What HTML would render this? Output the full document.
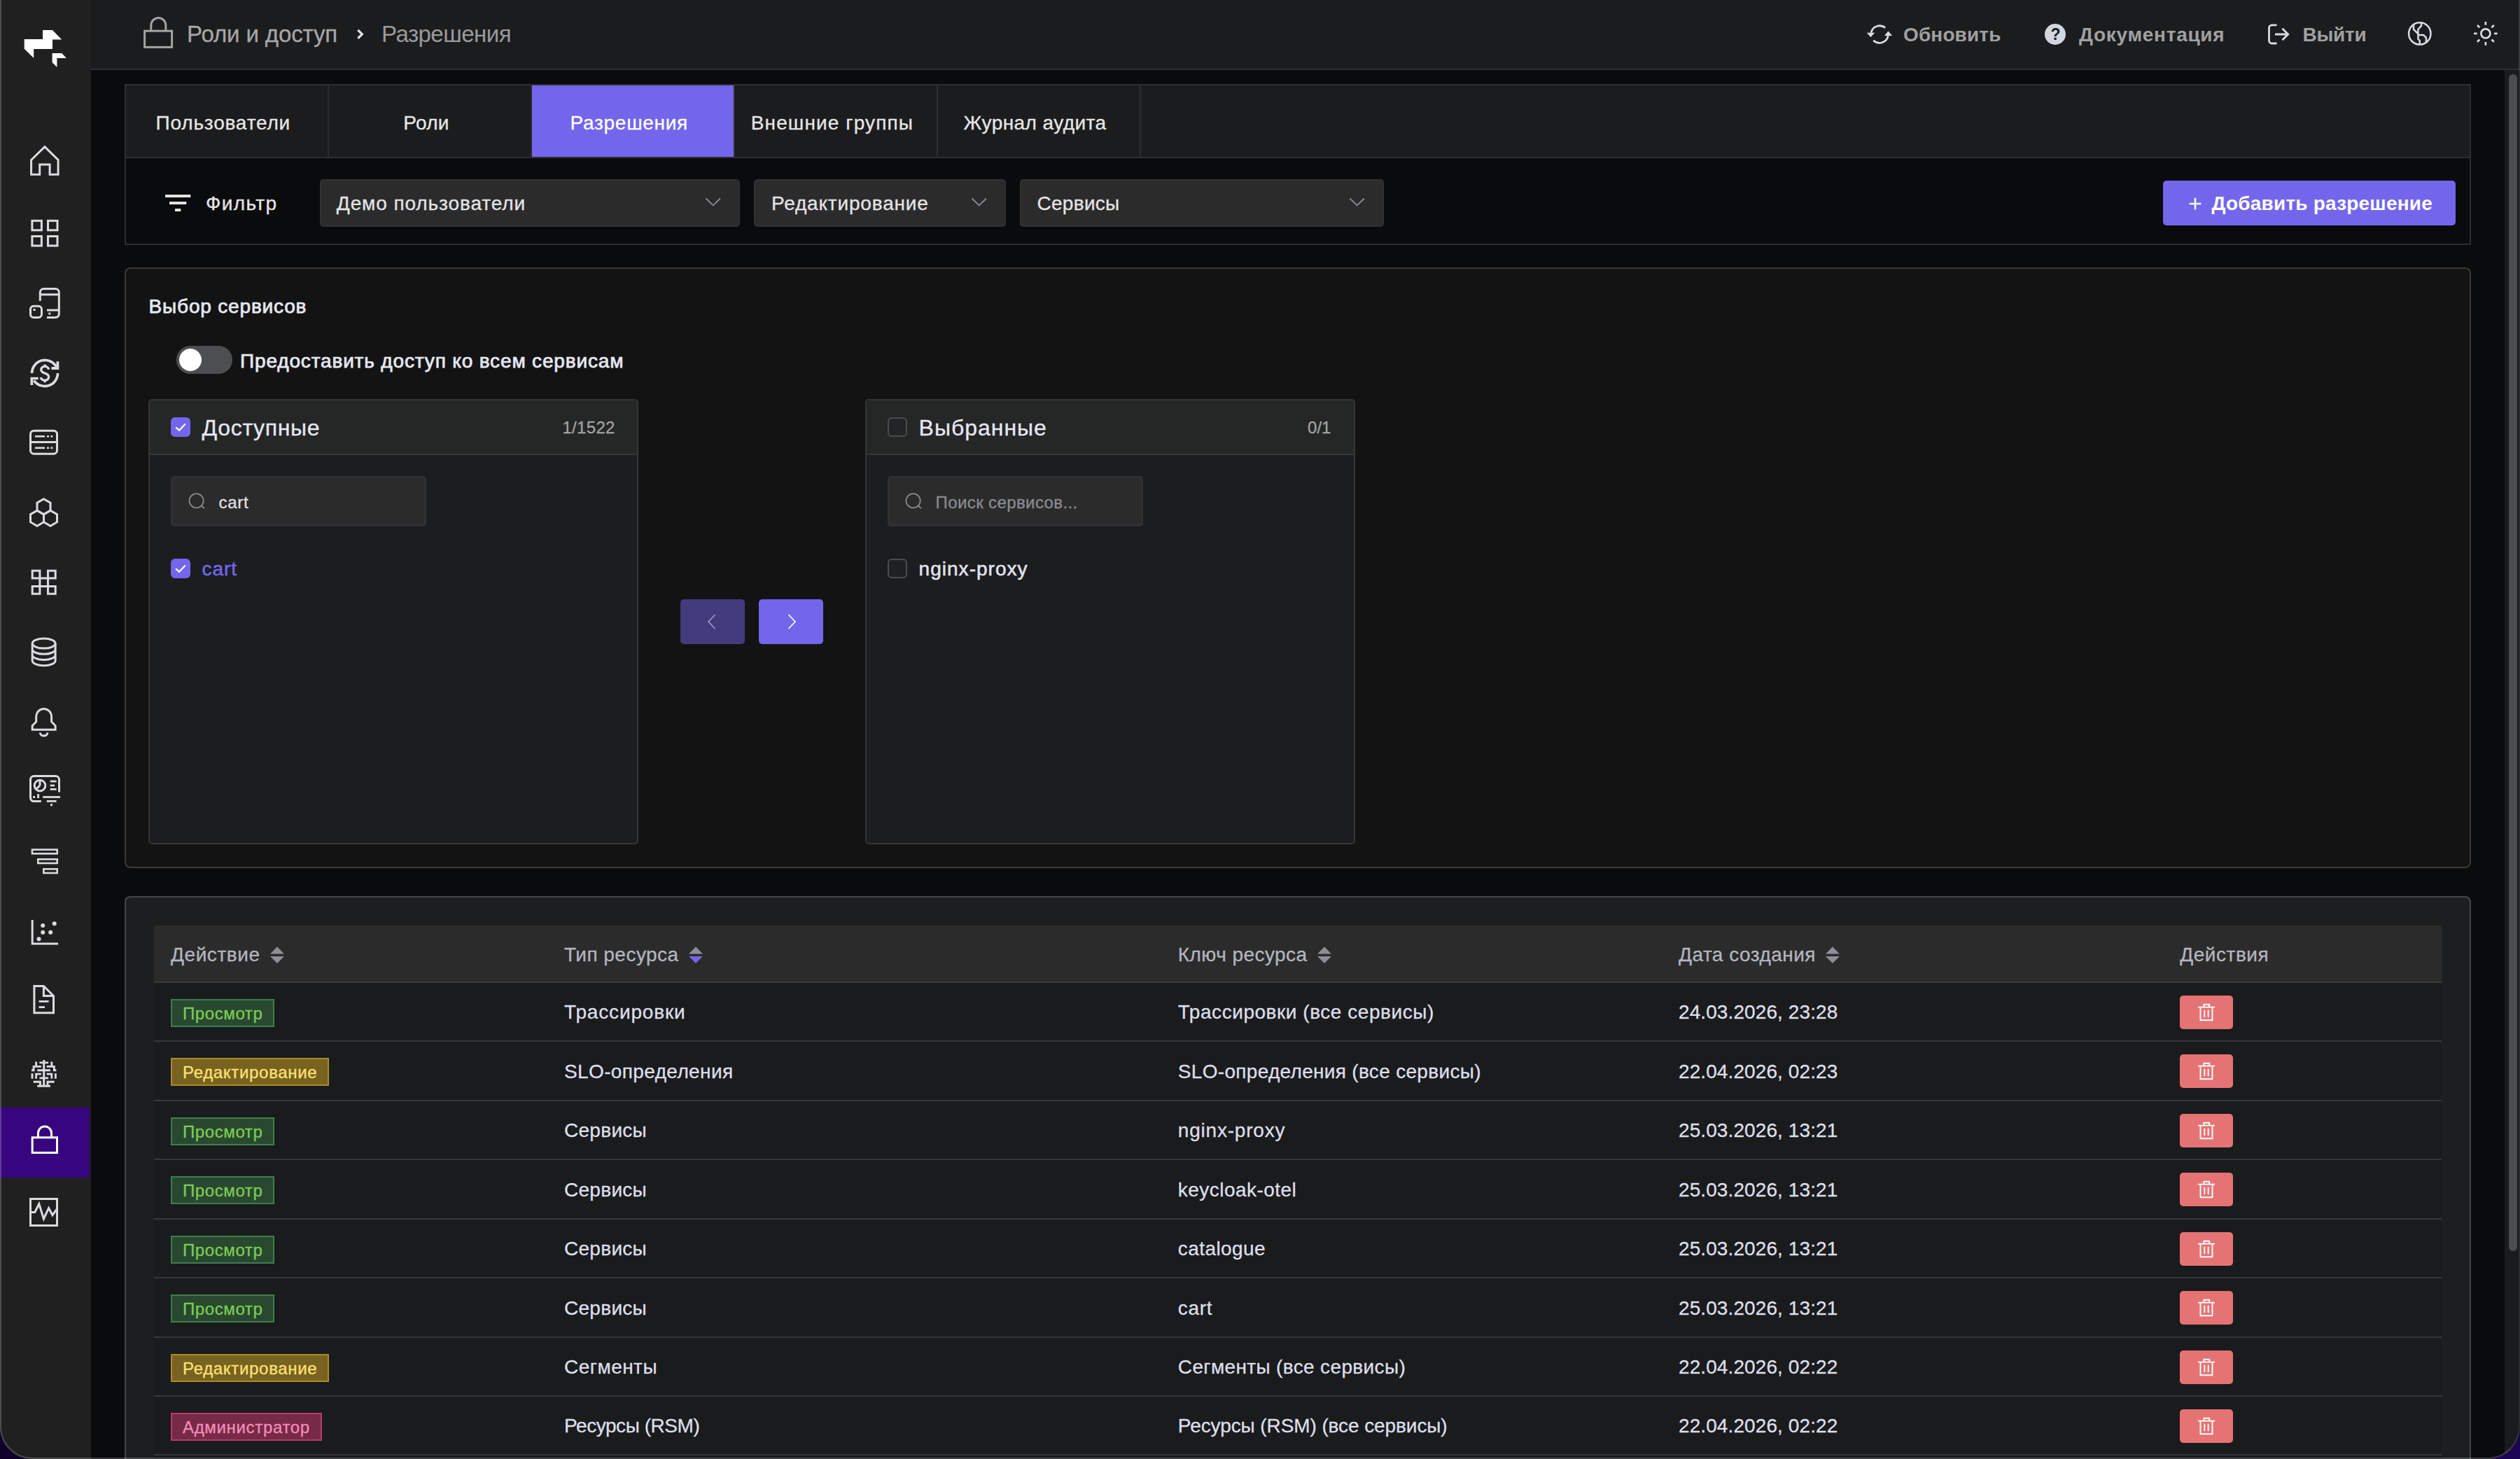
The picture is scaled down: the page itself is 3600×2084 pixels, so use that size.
<!DOCTYPE html>
<html lang="ru"><head><meta charset="utf-8">
<title>Роли и доступ — Разрешения</title>
<style>
html,body{margin:0;padding:0}
body{width:3600px;height:2084px;overflow:hidden;position:relative;background:linear-gradient(90deg,#0f0029 0%,#12002f 50%,#1d0556 100%);font-family:"Liberation Sans",sans-serif;}
#win{position:absolute;left:0;top:0;width:3600px;height:2084px;box-sizing:border-box;overflow:hidden;border-radius:0 0 46px 46px;background:#0a0b0d;}
#frame{position:absolute;left:0;top:-4px;width:3600px;height:2088px;box-sizing:border-box;border-radius:0 0 46px 46px;border:2px solid rgba(255,255,255,.2);border-top:none;border-right-color:rgba(255,255,255,.13);pointer-events:none;z-index:50}
.t{position:absolute;white-space:nowrap;display:block}
svg{position:absolute;overflow:visible}
.ic{fill:none;stroke:#d9dbdf;stroke-width:3}
table{border-collapse:collapse}
</style></head><body>
<div id="win">
<nav style="position:absolute;left:0px;top:0px;width:130px;height:2084px;background:#202020;"><div style="position:absolute;left:0px;top:1582px;width:128px;height:100px;background:#37067f;"></div><svg class="ic" width="130" height="2084" viewBox="0 0 130 2084" style="left:0;top:0"><g fill="#fff" stroke="none"><polygon points="61.1,42.9 75,42.9 88.2,56.4 75,56.4 75,70.1 48.2,70.1 48.2,83.1 34.7,69.7 34.7,56 61.1,56"/><polygon points="74.6,76.1 88.2,76.1 94.9,83.1 81.4,83.1 81.4,96 74.6,89.2"/></g><path d="M44.6 228.5 L63.9 209.6 L83.1 228.5 V249.2 H71.1 V235 H56.7 V249.2 H44.6 Z"/><rect x="45.9" y="315.3" width="13.5" height="13.5"/><rect x="68.5" y="315.3" width="13.5" height="13.5"/><rect x="45.9" y="337.5" width="13.5" height="13.5"/><rect x="68.5" y="337.5" width="13.5" height="13.5"/><path d="M57.3 429.8 V417.5 a5 5 0 0 1 5 -5 H79.3 a5 5 0 0 1 5 5 V448.5 a5 5 0 0 1 -5 5 H67 M57.3 420.8 H84.3 M67 443 H84.3"/><rect x="43.5" y="437.3" width="16" height="16.2" rx="4.5"/><g fill="#d9dbdf" stroke="none"><rect x="47.5" y="441" width="3" height="3"/><rect x="69.3" y="446.5" width="3" height="3"/></g><g stroke-width="3.7"><path d="M45.6 533.1 A18.6 18.6 0 0 1 80.2 523.5 M82.5 533.1 A18.6 18.6 0 0 1 48.6 543.6"/></g><g fill="#d9dbdf" stroke="none"><polygon points="84.3,516.2 84.3,527.9 73.5,527.9 73.5,524.1 80.5,524.1 80.5,516.2"/><polygon points="43.5,549.9 43.5,538.7 54.7,538.7 54.7,542.3 47.3,542.3 47.3,549.9"/></g><path stroke-width="3.3" d="M69.8 527.8 C68.8 524.9 66.5 523.4 64 523.4 C60.8 523.4 58.8 525.4 58.8 528.1 C58.8 531.2 61.3 532.4 64 533.2 C67 534.1 69.6 535.5 69.6 538.6 C69.6 541.5 67.2 543.3 64 543.3 C61.2 543.3 59 541.8 58 539.2 M64 520.4 V523.6 M64 543.2 V546.2"/><rect x="43.5" y="615.2" width="38" height="33" rx="5"/><path d="M43.5 631.6 H81.5"/><g fill="#d9dbdf" stroke="none"><rect x="50" y="622" width="14" height="2.6"/><rect x="67" y="622" width="3" height="2.6"/><rect x="72.4" y="622" width="3" height="2.6"/><rect x="50" y="638.5" width="14" height="2.6"/><rect x="67" y="638.5" width="3" height="2.6"/><rect x="72.4" y="638.5" width="3" height="2.6"/></g><polygon points="62.5,712.7 72.0,718.2 72.0,729.2 62.5,734.7 53.0,729.2 53.0,718.2"/><polygon points="53.0,729.2 62.5,734.7 62.5,745.7 53.0,751.2 43.5,745.7 43.5,734.7"/><polygon points="72.0,729.2 81.5,734.7 81.5,745.7 72.0,751.2 62.5,745.7 62.5,734.7"/><rect x="46.2" y="815.2" width="10.7" height="10.7"/><rect x="68.5" y="815.2" width="10.7" height="10.7"/><rect x="46.2" y="837.5" width="10.7" height="10.7"/><rect x="68.5" y="837.5" width="10.7" height="10.7"/><rect x="56.9" y="825.9" width="11.6" height="11.6"/><ellipse cx="62.65" cy="919.1" rx="16.45" ry="7"/><path d="M46.2 919.1 V943.7 a16.45 7 0 0 0 32.9 0 V919.1 M46.2 927.3 a16.45 7 0 0 0 32.9 0 M46.2 935.5 a16.45 7 0 0 0 32.9 0"/><path d="M46.2 1042.2 V1036.5 L51.7 1031 V1023.5 a10.95 10.95 0 0 1 21.9 0 V1031 L79.1 1036.5 V1042.2 Z M57.3 1046.6 a5.3 4.5 0 0 0 10.6 0"/><path d="M58.8 1144.6 H48.5 a5 5 0 0 1 -5 -5 V1113.5 a5 5 0 0 1 5 -5 H79.5 a5 5 0 0 1 5 5 V1131.6" /><circle cx="57" cy="1122" r="7.8"/><path d="M57 1122 V1114.2 M57 1122 L51.6 1127.4"/><g fill="#d9dbdf" stroke="none"><rect x="71.7" y="1114.6" width="8.9" height="2.8"/><rect x="71.7" y="1120.6" width="6.3" height="2.8"/><rect x="71.7" y="1126" width="8.9" height="2.8"/><rect x="47.1" y="1137" width="3" height="3"/><rect x="53.1" y="1134.2" width="3" height="5.8"/><rect x="61.2" y="1137.1" width="24.8" height="2.8"/><rect x="66.8" y="1143" width="13.8" height="2.8"/><rect x="72" y="1148.2" width="3" height="3"/></g><g stroke-width="2.6"><rect x="46" y="1213.6" width="35.7" height="5.7"/><rect x="54.3" y="1227.3" width="27.4" height="5.7"/><rect x="62.3" y="1241.3" width="19.4" height="5.7"/></g><path d="M46.2 1314 V1348 H83"/><g fill="#d9dbdf" stroke="none"><circle cx="61.2" cy="1322" r="3"/><circle cx="77.7" cy="1319.3" r="3"/><circle cx="61.2" cy="1331.8" r="3"/><circle cx="72.2" cy="1331.8" r="3"/><circle cx="55.5" cy="1341.2" r="3"/></g><path d="M48.9 1408.5 H62.4 L76.5 1422.5 V1446.7 H48.9 Z M62.4 1408.5 V1422.5 H76.5"/><path stroke-width="2.8" d="M55.5 1430.3 H69.6 M55.5 1438.6 H64"/><path stroke-width="2.9" d="M62.7 1514 V1551.4 M56.3 1517.9 H69.1 M53.2 1528.8 H72 M56.3 1539.9 H69.1 M53.2 1551.2 H72 M51.6 1516.5 V1523.4 M58.8 1523.4 H48.1 V1528.8 H45 M46 1533.3 V1540.7 M58.8 1534.1 H51.6 V1540.7 M47.7 1545.2 H57.4 V1551.2 M73.8 1516.5 V1523.4 M66.6 1523.4 H77.3 V1528.8 H80.4 M79.4 1533.3 V1540.7 M66.6 1534.1 H73.8 V1540.7 M77.7 1545.2 H68 V1551.2"/><g stroke="#fff"><rect x="46.2" y="1624.8" width="35.3" height="21.7"/><path d="M54.5 1624.8 V1618.5 a9.5 9.5 0 0 1 19 0 V1624.8"/></g><rect x="43.5" y="1712.5" width="38" height="38"/><path d="M45 1731.5 H49.8 L55.8 1719.6 L62.4 1741 L69.6 1725.5 L75 1735.7 L81.5 1726.7"/></svg></nav><header style="position:absolute;left:130px;top:0px;width:3470px;height:98px;background:#1b1c1e;border-bottom:2px solid #2d2e31;"></header><svg width="60" height="60" viewBox="200 18 60 60" style="left:200px;top:18px" fill="none" stroke="#a3a3a4" stroke-width="3"><rect x="206.6" y="44.2" width="39" height="23.2"/><path d="M215.8 44.2 V36 a10.5 10.5 0 0 1 21 0 V44.2"/></svg><span class="t" style="left:267.0px;top:32.2px;font-size:33px;line-height:33px;color:#a6a6a6;letter-spacing:-0.123px;-webkit-text-stroke:0.3px #a6a6a6;">Роли и доступ</span><svg width="14" height="20" viewBox="507 39 14 20" style="left:507px;top:39px" fill="none" stroke="#e4e4e6" stroke-width="3.2"><path d="M511.3 42.9 L517.3 48.8 L511.3 54.8"/></svg><span class="t" style="left:545.0px;top:32.2px;font-size:33px;line-height:33px;color:#9a9a9b;letter-spacing:-0.508px;">Разрешения</span><svg width="50" height="50" viewBox="2660 24 50 50" style="left:2660px;top:24px" fill="none" stroke="#d9dae4" stroke-width="2.8"><path d="M2693.2 39.7 A12.5 12.5 0 0 0 2673 46.8 M2676.3 57.8 A12.5 12.5 0 0 0 2697.3 51"/><g fill="#d9dae4" stroke="none"><polygon points="2666.9,46.8 2678.2,46.8 2672.4,53.2"/><polygon points="2691.9,50.9 2703.2,50.9 2697.5,44.6"/></g></svg><span class="t" style="left:2719.0px;top:36.1px;font-size:28px;line-height:28px;color:#a0a0a1;font-weight:700;letter-spacing:0.130px;">Обновить</span><div style="position:absolute;left:2921px;top:34px;width:30px;height:30px;border-radius:50%;background:#d3d5e0"></div><span class="t" style="left:2929.6px;top:37.9px;font-size:23px;line-height:23px;color:#1b1c1e;font-weight:700;">?</span><span class="t" style="left:2970.0px;top:36.1px;font-size:28px;line-height:28px;color:#a0a0a1;font-weight:700;letter-spacing:0.701px;">Документация</span><svg width="40" height="40" viewBox="3236 29 40 40" style="left:3236px;top:29px" fill="none" stroke="#d9dae4" stroke-width="2.8"><path d="M3252.5 35.8 H3245.5 a4 4 0 0 0 -4 4 V58 a4 4 0 0 0 4 4 H3252.5 M3250 49 H3268.5 M3260.5 40.8 L3268.7 49 L3260.5 57.2"/></svg><span class="t" style="left:3289.5px;top:36.1px;font-size:28px;line-height:28px;color:#a0a0a1;font-weight:700;letter-spacing:-0.256px;">Выйти</span><svg width="40" height="40" viewBox="3437 28 40 40" style="left:3437px;top:28px" fill="none" stroke="#d9dae4" stroke-width="2.5"><circle cx="3456.8" cy="47.9" r="15.7"/><path d="M3459 32.4 V36.9 L3454.4 42 V55.5 L3456.8 58.2 V63.4 M3448 35.2 V42 L3454.4 48.4 M3454.4 50.1 H3462.2 L3465.9 53.8 V60"/></svg><svg width="40" height="40" viewBox="3531 28 40 40" style="left:3531px;top:28px" fill="none" stroke="#d9dae4" stroke-width="2.7"><circle cx="3550.9" cy="47.9" r="6.5"/><path d="M3563.1 47.9 L3567.7 47.9 M3559.5 56.5 L3562.8 59.8 M3550.9 60.1 L3550.9 64.7 M3542.3 56.5 L3539.0 59.8 M3538.7 47.9 L3534.1 47.9 M3542.3 39.3 L3539.0 36.0 M3550.9 35.7 L3550.9 31.1 M3559.5 39.3 L3562.8 36.0 "/></svg><div style="position:absolute;left:3578px;top:100px;width:20px;height:1984px;background:#1a1b1d;"></div><div style="position:absolute;left:3584px;top:106px;width:12px;height:1681px;background:#4b4c4e;border-radius:6px;"></div><div style="position:absolute;left:178px;top:120px;width:3352px;height:230px;box-sizing:border-box;border:2px solid #2d2e31;background:#0a0b0d;"></div><div style="position:absolute;left:180px;top:122px;width:3348px;height:102px;background:#1b1c1e;border-bottom:2px solid #2d2e31;"></div><div style="position:absolute;left:468px;top:122px;width:2px;height:102px;background:#2d2e31;"></div><span class="t" style="left:222.6px;top:161.7px;font-size:28px;line-height:28px;color:#e6e6e6;letter-spacing:0.802px;-webkit-text-stroke:0.3px #e6e6e6;">Пользователи</span><div style="position:absolute;left:758px;top:122px;width:2px;height:102px;background:#2d2e31;"></div><span class="t" style="left:576.3px;top:161.7px;font-size:28px;line-height:28px;color:#e6e6e6;letter-spacing:0.278px;-webkit-text-stroke:0.3px #e6e6e6;">Роли</span><div style="position:absolute;left:760px;top:122px;width:288px;height:102px;background:#7366eb;"></div><div style="position:absolute;left:1048px;top:122px;width:2px;height:102px;background:#2d2e31;"></div><span class="t" style="left:814.6px;top:161.7px;font-size:28px;line-height:28px;color:#ffffff;letter-spacing:0.710px;-webkit-text-stroke:0.3px #ffffff;">Разрешения</span><div style="position:absolute;left:1338px;top:122px;width:2px;height:102px;background:#2d2e31;"></div><span class="t" style="left:1072.8px;top:161.7px;font-size:28px;line-height:28px;color:#e6e6e6;letter-spacing:1.116px;-webkit-text-stroke:0.3px #e6e6e6;">Внешние группы</span><div style="position:absolute;left:1628px;top:122px;width:2px;height:102px;background:#2d2e31;"></div><span class="t" style="left:1376.6px;top:161.7px;font-size:28px;line-height:28px;color:#e6e6e6;letter-spacing:0.434px;-webkit-text-stroke:0.3px #e6e6e6;">Журнал аудита</span><svg width="40" height="28" viewBox="234 276 40 28" style="left:234px;top:276px" fill="#e2e2e2"><rect x="236" y="278" width="36.3" height="4"/><rect x="242" y="288" width="24.2" height="4"/><rect x="250" y="298" width="8.3" height="4"/></svg><span class="t" style="left:294.1px;top:277.0px;font-size:28px;line-height:28px;color:#e6e6e6;letter-spacing:1.372px;-webkit-text-stroke:0.3px #e6e6e6;">Фильтр</span><div style="position:absolute;left:457px;top:256px;width:600px;height:68px;box-sizing:border-box;background:#2b2b2c;border:2px solid #303133;border-radius:5px;"></div><span class="t" style="left:480.8px;top:277.4px;font-size:28px;line-height:28px;color:#e4e4e4;letter-spacing:0.896px;-webkit-text-stroke:0.3px #e4e4e4;">Демо пользователи</span><svg width="26" height="16" viewBox="0 0 26 16" style="left:1005.5px;top:281px" fill="none" stroke="#8d8e9a" stroke-width="1.75"><path d="M2.5 2.5 L12.7 12.3 L22.9 2.5"/></svg><div style="position:absolute;left:1077px;top:256px;width:360px;height:68px;box-sizing:border-box;background:#2b2b2c;border:2px solid #303133;border-radius:5px;"></div><span class="t" style="left:1101.9px;top:277.4px;font-size:28px;line-height:28px;color:#e4e4e4;letter-spacing:0.820px;-webkit-text-stroke:0.3px #e4e4e4;">Редактирование</span><svg width="26" height="16" viewBox="0 0 26 16" style="left:1385.5px;top:281px" fill="none" stroke="#8d8e9a" stroke-width="1.75"><path d="M2.5 2.5 L12.7 12.3 L22.9 2.5"/></svg><div style="position:absolute;left:1457px;top:256px;width:520px;height:68px;box-sizing:border-box;background:#2b2b2c;border:2px solid #303133;border-radius:5px;"></div><span class="t" style="left:1481.5px;top:277.4px;font-size:28px;line-height:28px;color:#e4e4e4;letter-spacing:0.284px;-webkit-text-stroke:0.3px #e4e4e4;">Сервисы</span><svg width="26" height="16" viewBox="0 0 26 16" style="left:1925.5px;top:281px" fill="none" stroke="#8d8e9a" stroke-width="1.75"><path d="M2.5 2.5 L12.7 12.3 L22.9 2.5"/></svg><div style="position:absolute;left:3090px;top:258px;width:418px;height:64px;background:#7366eb;border-radius:5px;"></div><svg width="20" height="20" viewBox="0 0 20 20" style="left:3126.3px;top:281.2px" stroke="#fff" stroke-width="2.6"><path d="M10 1.7 V18.3 M1.7 10 H18.3"/></svg><span class="t" style="left:3159.5px;top:276.8px;font-size:28px;line-height:28px;color:#ffffff;font-weight:700;letter-spacing:0.203px;">Добавить разрешение</span><div style="position:absolute;left:178px;top:382px;width:3352px;height:858px;box-sizing:border-box;border:2px solid #3a3a3b;border-radius:8px;background:#131313;"></div><span class="t" style="left:212.6px;top:424.4px;font-size:28px;line-height:28px;color:#e6e8f2;letter-spacing:0.821px;-webkit-text-stroke:0.75px #e6e8f2;">Выбор сервисов</span><div style="position:absolute;left:252px;top:494px;width:80px;height:40px;background:#4d4e50;border-radius:20px;"></div><div style="position:absolute;left:256px;top:498px;width:32px;height:32px;background:#fff;border-radius:50%;"></div><span class="t" style="left:343.0px;top:501.9px;font-size:28px;line-height:28px;color:#e6e8f2;letter-spacing:0.846px;-webkit-text-stroke:0.75px #e6e8f2;">Предоставить доступ ко всем сервисам</span><div style="position:absolute;left:212px;top:570px;width:700px;height:636px;box-sizing:border-box;border:2px solid #343537;border-radius:5px;background:#1c1d1f;"></div><div style="position:absolute;left:214px;top:572px;width:696px;height:76px;background:#252626;border-bottom:2px solid #343537;border-radius:3px 3px 0 0;"></div><div style="position:absolute;left:244px;top:596px;width:28px;height:28px;background:#7366eb;border-radius:6px;"><svg width="28" height="28" viewBox="0 0 28 28" style="left:0;top:0" fill="none" stroke="#fff" stroke-width="2.2"><path d="M7.2 14.2 L12 18.8 L20.8 9.4"/></svg></div><div style="position:absolute;left:244px;top:798px;width:28px;height:28px;background:#7366eb;border-radius:6px;"><svg width="28" height="28" viewBox="0 0 28 28" style="left:0;top:0" fill="none" stroke="#fff" stroke-width="2.2"><path d="M7.2 14.2 L12 18.8 L20.8 9.4"/></svg></div><span class="t" style="left:288.6px;top:595.4px;font-size:32px;line-height:32px;color:#e6e8f2;letter-spacing:0.662px;-webkit-text-stroke:0.3px #e6e8f2;">Доступные</span><span class="t" style="left:803.4px;top:599.0px;font-size:24px;line-height:24px;color:#a3a3a5;letter-spacing:0.332px;-webkit-text-stroke:0.3px #a3a3a5;">1/1522</span><div style="position:absolute;left:244px;top:680px;width:365px;height:72px;box-sizing:border-box;background:#2b2b2c;border:3px solid #303134;border-radius:5px;"></div><svg width="30" height="30" viewBox="0 0 30 30" style="left:268px;top:702px" fill="none" stroke="#8b8b8f" stroke-width="1.8"><circle cx="12.6" cy="13.2" r="10.1"/><path d="M19.8 20.3 L23.8 24.2"/></svg><span class="t" style="left:312.6px;top:705.8px;font-size:24px;line-height:24px;color:#e2e2e2;letter-spacing:0.648px;-webkit-text-stroke:0.3px #e2e2e2;">cart</span><span class="t" style="left:288.6px;top:799.4px;font-size:28px;line-height:28px;color:#7366eb;letter-spacing:0.930px;-webkit-text-stroke:0.55px #7366eb;">cart</span><div style="position:absolute;left:1236px;top:570px;width:700px;height:636px;box-sizing:border-box;border:2px solid #343537;border-radius:5px;background:#1c1d1f;"></div><div style="position:absolute;left:1238px;top:572px;width:696px;height:76px;background:#252626;border-bottom:2px solid #343537;border-radius:3px 3px 0 0;"></div><div style="position:absolute;left:1268px;top:596px;width:28px;height:28px;box-sizing:border-box;border:2px solid #4b4c4f;border-radius:6px;background:#232425;"></div><div style="position:absolute;left:1268px;top:798px;width:28px;height:28px;box-sizing:border-box;border:2px solid #4b4c4f;border-radius:6px;background:#1f2022;"></div><span class="t" style="left:1312.6px;top:595.4px;font-size:32px;line-height:32px;color:#e6e8f2;letter-spacing:0.977px;-webkit-text-stroke:0.3px #e6e8f2;">Выбранные</span><span class="t" style="left:1868.0px;top:599.0px;font-size:24px;line-height:24px;color:#a3a3a5;letter-spacing:0.046px;-webkit-text-stroke:0.3px #a3a3a5;">0/1</span><div style="position:absolute;left:1268px;top:680px;width:365px;height:72px;box-sizing:border-box;background:#2b2b2c;border:3px solid #303134;border-radius:5px;"></div><svg width="30" height="30" viewBox="0 0 30 30" style="left:1292px;top:702px" fill="none" stroke="#8b8b8f" stroke-width="1.8"><circle cx="12.6" cy="13.2" r="10.1"/><path d="M19.8 20.3 L23.8 24.2"/></svg><span class="t" style="left:1336.6px;top:705.8px;font-size:24px;line-height:24px;color:#8c8c90;letter-spacing:0.389px;-webkit-text-stroke:0.3px #8c8c90;">Поиск сервисов...</span><span class="t" style="left:1312.6px;top:799.4px;font-size:28px;line-height:28px;color:#e2e4ee;letter-spacing:1.023px;-webkit-text-stroke:0.55px #e2e4ee;">nginx-proxy</span><div style="position:absolute;left:972px;top:856px;width:92px;height:64px;background:#433b7d;border-radius:5px;"></div><div style="position:absolute;left:1084px;top:856px;width:92px;height:64px;background:#7366eb;border-radius:5px;"></div><svg width="20" height="28" viewBox="0 0 20 28" style="left:1007px;top:874px" fill="none" stroke="#9c96c8" stroke-width="1.75"><path d="M14.5 4 L5 14 L14.5 24"/></svg><svg width="20" height="28" viewBox="0 0 20 28" style="left:1121px;top:874px" fill="none" stroke="#fff" stroke-width="1.75"><path d="M5.5 4 L15 14 L5.5 24"/></svg><div style="position:absolute;left:178px;top:1280px;width:3352px;height:900px;box-sizing:border-box;border:2px solid #454647;border-radius:8px;background:#1d1e20;"></div><div style="position:absolute;left:220px;top:1322px;width:3268px;height:80px;background:#2b2b2b;border-bottom:2px solid #3a3b3e;"></div><div style="position:absolute;left:220px;top:1404px;width:3268px;height:680px;background:#1a1b1d;"></div><span class="t" style="left:244.0px;top:1350.2px;font-size:28px;line-height:28px;color:#b3b5bf;letter-spacing:0.563px;-webkit-text-stroke:0.3px #b3b5bf;">Действие</span><svg width="22" height="26" viewBox="0 0 22 26" style="left:384.8px;top:1351px"><polygon points="11,1.3 20.9,11.4 1.1,11.4" fill="#8d8e98"/><polygon points="1.1,15 20.9,15 11,25" fill="#8d8e98"/></svg><span class="t" style="left:806.0px;top:1350.2px;font-size:28px;line-height:28px;color:#b3b5bf;letter-spacing:0.469px;-webkit-text-stroke:0.3px #b3b5bf;">Тип ресурса</span><svg width="22" height="26" viewBox="0 0 22 26" style="left:982.8px;top:1351px"><polygon points="11,1.3 20.9,11.4 1.1,11.4" fill="#8d8e98"/><polygon points="1.1,15 20.9,15 11,25" fill="#7366eb"/></svg><span class="t" style="left:1682.8px;top:1350.2px;font-size:28px;line-height:28px;color:#b3b5bf;letter-spacing:0.442px;-webkit-text-stroke:0.3px #b3b5bf;">Ключ ресурса</span><svg width="22" height="26" viewBox="0 0 22 26" style="left:1880.7px;top:1351px"><polygon points="11,1.3 20.9,11.4 1.1,11.4" fill="#8d8e98"/><polygon points="1.1,15 20.9,15 11,25" fill="#8d8e98"/></svg><span class="t" style="left:2398.0px;top:1350.2px;font-size:28px;line-height:28px;color:#b3b5bf;letter-spacing:0.478px;-webkit-text-stroke:0.3px #b3b5bf;">Дата создания</span><svg width="22" height="26" viewBox="0 0 22 26" style="left:2607.2px;top:1351px"><polygon points="11,1.3 20.9,11.4 1.1,11.4" fill="#8d8e98"/><polygon points="1.1,15 20.9,15 11,25" fill="#8d8e98"/></svg><span class="t" style="left:3114.2px;top:1350.2px;font-size:28px;line-height:28px;color:#b3b5bf;letter-spacing:0.552px;-webkit-text-stroke:0.3px #b3b5bf;">Действия</span><div style="position:absolute;left:220px;top:1486px;width:3268px;height:2px;background:#36373a;"></div><div style="position:absolute;left:244px;top:1427px;width:148px;height:40px;box-sizing:border-box;background:#28492f;border:2px solid #3f7d50;"></div><span class="t" style="left:261.0px;top:1436.0px;font-size:24px;line-height:24px;color:#7fcb55;letter-spacing:0.599px;-webkit-text-stroke:0.3px #7fcb55;">Просмотр</span><span class="t" style="left:806.0px;top:1432.4px;font-size:28px;line-height:28px;color:#dddfe9;letter-spacing:0.851px;-webkit-text-stroke:0.3px #dddfe9;">Трассировки</span><span class="t" style="left:1682.8px;top:1432.4px;font-size:28px;line-height:28px;color:#dddfe9;letter-spacing:0.545px;-webkit-text-stroke:0.3px #dddfe9;">Трассировки (все сервисы)</span><span class="t" style="left:2398.0px;top:1432.4px;font-size:28px;line-height:28px;color:#dddfe9;letter-spacing:0.094px;-webkit-text-stroke:0.3px #dddfe9;">24.03.2026, 23:28</span><div style="position:absolute;left:3114px;top:1422px;width:76px;height:48px;background:#e57373;border-radius:5px;"><svg width="28" height="30" viewBox="3138 1431 28 30" style="left:24px;top:9px" fill="none" stroke="#fff" stroke-width="1.9"><path d="M3140 1438.6 H3164 M3148.4 1438.6 V1434.8 H3156.2 V1438.6 M3143.5 1438.6 V1457.2 H3160.5 V1438.6 M3149.3 1442.7 V1453 M3154.7 1442.7 V1453"/></svg></div><div style="position:absolute;left:220px;top:1571px;width:3268px;height:2px;background:#36373a;"></div><div style="position:absolute;left:244px;top:1511px;width:226px;height:40px;box-sizing:border-box;background:#78621f;border:2px solid #a88a2c;"></div><span class="t" style="left:261.0px;top:1520.0px;font-size:24px;line-height:24px;color:#fbe277;letter-spacing:0.684px;-webkit-text-stroke:0.3px #fbe277;">Редактирование</span><span class="t" style="left:806.0px;top:1516.9px;font-size:28px;line-height:28px;color:#dddfe9;letter-spacing:0.380px;-webkit-text-stroke:0.3px #dddfe9;">SLO-определения</span><span class="t" style="left:1682.8px;top:1516.9px;font-size:28px;line-height:28px;color:#dddfe9;letter-spacing:0.313px;-webkit-text-stroke:0.3px #dddfe9;">SLO-определения (все сервисы)</span><span class="t" style="left:2398.0px;top:1516.9px;font-size:28px;line-height:28px;color:#dddfe9;letter-spacing:0.094px;-webkit-text-stroke:0.3px #dddfe9;">22.04.2026, 02:23</span><div style="position:absolute;left:3114px;top:1506px;width:76px;height:48px;background:#e57373;border-radius:5px;"><svg width="28" height="30" viewBox="3138 1431 28 30" style="left:24px;top:9px" fill="none" stroke="#fff" stroke-width="1.9"><path d="M3140 1438.6 H3164 M3148.4 1438.6 V1434.8 H3156.2 V1438.6 M3143.5 1438.6 V1457.2 H3160.5 V1438.6 M3149.3 1442.7 V1453 M3154.7 1442.7 V1453"/></svg></div><div style="position:absolute;left:220px;top:1655px;width:3268px;height:2px;background:#36373a;"></div><div style="position:absolute;left:244px;top:1596px;width:148px;height:40px;box-sizing:border-box;background:#28492f;border:2px solid #3f7d50;"></div><span class="t" style="left:261.0px;top:1605.0px;font-size:24px;line-height:24px;color:#7fcb55;letter-spacing:0.599px;-webkit-text-stroke:0.3px #7fcb55;">Просмотр</span><span class="t" style="left:806.0px;top:1601.3px;font-size:28px;line-height:28px;color:#dddfe9;letter-spacing:0.284px;-webkit-text-stroke:0.3px #dddfe9;">Сервисы</span><span class="t" style="left:1682.8px;top:1601.3px;font-size:28px;line-height:28px;color:#dddfe9;letter-spacing:0.796px;-webkit-text-stroke:0.3px #dddfe9;">nginx-proxy</span><span class="t" style="left:2398.0px;top:1601.3px;font-size:28px;line-height:28px;color:#dddfe9;letter-spacing:0.094px;-webkit-text-stroke:0.3px #dddfe9;">25.03.2026, 13:21</span><div style="position:absolute;left:3114px;top:1591px;width:76px;height:48px;background:#e57373;border-radius:5px;"><svg width="28" height="30" viewBox="3138 1431 28 30" style="left:24px;top:9px" fill="none" stroke="#fff" stroke-width="1.9"><path d="M3140 1438.6 H3164 M3148.4 1438.6 V1434.8 H3156.2 V1438.6 M3143.5 1438.6 V1457.2 H3160.5 V1438.6 M3149.3 1442.7 V1453 M3154.7 1442.7 V1453"/></svg></div><div style="position:absolute;left:220px;top:1740px;width:3268px;height:2px;background:#36373a;"></div><div style="position:absolute;left:244px;top:1680px;width:148px;height:40px;box-sizing:border-box;background:#28492f;border:2px solid #3f7d50;"></div><span class="t" style="left:261.0px;top:1689.0px;font-size:24px;line-height:24px;color:#7fcb55;letter-spacing:0.599px;-webkit-text-stroke:0.3px #7fcb55;">Просмотр</span><span class="t" style="left:806.0px;top:1685.7px;font-size:28px;line-height:28px;color:#dddfe9;letter-spacing:0.284px;-webkit-text-stroke:0.3px #dddfe9;">Сервисы</span><span class="t" style="left:1682.8px;top:1685.7px;font-size:28px;line-height:28px;color:#dddfe9;letter-spacing:0.460px;-webkit-text-stroke:0.3px #dddfe9;">keycloak-otel</span><span class="t" style="left:2398.0px;top:1685.7px;font-size:28px;line-height:28px;color:#dddfe9;letter-spacing:0.094px;-webkit-text-stroke:0.3px #dddfe9;">25.03.2026, 13:21</span><div style="position:absolute;left:3114px;top:1675px;width:76px;height:48px;background:#e57373;border-radius:5px;"><svg width="28" height="30" viewBox="3138 1431 28 30" style="left:24px;top:9px" fill="none" stroke="#fff" stroke-width="1.9"><path d="M3140 1438.6 H3164 M3148.4 1438.6 V1434.8 H3156.2 V1438.6 M3143.5 1438.6 V1457.2 H3160.5 V1438.6 M3149.3 1442.7 V1453 M3154.7 1442.7 V1453"/></svg></div><div style="position:absolute;left:220px;top:1824px;width:3268px;height:2px;background:#36373a;"></div><div style="position:absolute;left:244px;top:1765px;width:148px;height:40px;box-sizing:border-box;background:#28492f;border:2px solid #3f7d50;"></div><span class="t" style="left:261.0px;top:1774.0px;font-size:24px;line-height:24px;color:#7fcb55;letter-spacing:0.599px;-webkit-text-stroke:0.3px #7fcb55;">Просмотр</span><span class="t" style="left:806.0px;top:1770.1px;font-size:28px;line-height:28px;color:#dddfe9;letter-spacing:0.284px;-webkit-text-stroke:0.3px #dddfe9;">Сервисы</span><span class="t" style="left:1682.8px;top:1770.1px;font-size:28px;line-height:28px;color:#dddfe9;letter-spacing:0.417px;-webkit-text-stroke:0.3px #dddfe9;">catalogue</span><span class="t" style="left:2398.0px;top:1770.1px;font-size:28px;line-height:28px;color:#dddfe9;letter-spacing:0.094px;-webkit-text-stroke:0.3px #dddfe9;">25.03.2026, 13:21</span><div style="position:absolute;left:3114px;top:1760px;width:76px;height:48px;background:#e57373;border-radius:5px;"><svg width="28" height="30" viewBox="3138 1431 28 30" style="left:24px;top:9px" fill="none" stroke="#fff" stroke-width="1.9"><path d="M3140 1438.6 H3164 M3148.4 1438.6 V1434.8 H3156.2 V1438.6 M3143.5 1438.6 V1457.2 H3160.5 V1438.6 M3149.3 1442.7 V1453 M3154.7 1442.7 V1453"/></svg></div><div style="position:absolute;left:220px;top:1909px;width:3268px;height:2px;background:#36373a;"></div><div style="position:absolute;left:244px;top:1849px;width:148px;height:40px;box-sizing:border-box;background:#28492f;border:2px solid #3f7d50;"></div><span class="t" style="left:261.0px;top:1858.0px;font-size:24px;line-height:24px;color:#7fcb55;letter-spacing:0.599px;-webkit-text-stroke:0.3px #7fcb55;">Просмотр</span><span class="t" style="left:806.0px;top:1854.6px;font-size:28px;line-height:28px;color:#dddfe9;letter-spacing:0.284px;-webkit-text-stroke:0.3px #dddfe9;">Сервисы</span><span class="t" style="left:1682.8px;top:1854.6px;font-size:28px;line-height:28px;color:#dddfe9;letter-spacing:0.680px;-webkit-text-stroke:0.3px #dddfe9;">cart</span><span class="t" style="left:2398.0px;top:1854.6px;font-size:28px;line-height:28px;color:#dddfe9;letter-spacing:0.094px;-webkit-text-stroke:0.3px #dddfe9;">25.03.2026, 13:21</span><div style="position:absolute;left:3114px;top:1844px;width:76px;height:48px;background:#e57373;border-radius:5px;"><svg width="28" height="30" viewBox="3138 1431 28 30" style="left:24px;top:9px" fill="none" stroke="#fff" stroke-width="1.9"><path d="M3140 1438.6 H3164 M3148.4 1438.6 V1434.8 H3156.2 V1438.6 M3143.5 1438.6 V1457.2 H3160.5 V1438.6 M3149.3 1442.7 V1453 M3154.7 1442.7 V1453"/></svg></div><div style="position:absolute;left:220px;top:1993px;width:3268px;height:2px;background:#36373a;"></div><div style="position:absolute;left:244px;top:1934px;width:226px;height:40px;box-sizing:border-box;background:#78621f;border:2px solid #a88a2c;"></div><span class="t" style="left:261.0px;top:1943.0px;font-size:24px;line-height:24px;color:#fbe277;letter-spacing:0.684px;-webkit-text-stroke:0.3px #fbe277;">Редактирование</span><span class="t" style="left:806.0px;top:1939.0px;font-size:28px;line-height:28px;color:#dddfe9;letter-spacing:0.469px;-webkit-text-stroke:0.3px #dddfe9;">Сегменты</span><span class="t" style="left:1682.8px;top:1939.0px;font-size:28px;line-height:28px;color:#dddfe9;letter-spacing:0.360px;-webkit-text-stroke:0.3px #dddfe9;">Сегменты (все сервисы)</span><span class="t" style="left:2398.0px;top:1939.0px;font-size:28px;line-height:28px;color:#dddfe9;letter-spacing:0.094px;-webkit-text-stroke:0.3px #dddfe9;">22.04.2026, 02:22</span><div style="position:absolute;left:3114px;top:1929px;width:76px;height:48px;background:#e57373;border-radius:5px;"><svg width="28" height="30" viewBox="3138 1431 28 30" style="left:24px;top:9px" fill="none" stroke="#fff" stroke-width="1.9"><path d="M3140 1438.6 H3164 M3148.4 1438.6 V1434.8 H3156.2 V1438.6 M3143.5 1438.6 V1457.2 H3160.5 V1438.6 M3149.3 1442.7 V1453 M3154.7 1442.7 V1453"/></svg></div><div style="position:absolute;left:220px;top:2077px;width:3268px;height:2px;background:#36373a;"></div><div style="position:absolute;left:244px;top:2018px;width:216px;height:40px;box-sizing:border-box;background:#762a46;border:2px solid #b43c6b;"></div><span class="t" style="left:261.0px;top:2027.0px;font-size:24px;line-height:24px;color:#f48dbb;letter-spacing:0.665px;-webkit-text-stroke:0.3px #f48dbb;">Администратор</span><span class="t" style="left:806.0px;top:2023.4px;font-size:28px;line-height:28px;color:#dddfe9;letter-spacing:-0.435px;-webkit-text-stroke:0.3px #dddfe9;">Ресурсы (RSM)</span><span class="t" style="left:1682.8px;top:2023.4px;font-size:28px;line-height:28px;color:#dddfe9;letter-spacing:-0.089px;-webkit-text-stroke:0.3px #dddfe9;">Ресурсы (RSM) (все сервисы)</span><span class="t" style="left:2398.0px;top:2023.4px;font-size:28px;line-height:28px;color:#dddfe9;letter-spacing:0.094px;-webkit-text-stroke:0.3px #dddfe9;">22.04.2026, 02:22</span><div style="position:absolute;left:3114px;top:2013px;width:76px;height:48px;background:#e57373;border-radius:5px;"><svg width="28" height="30" viewBox="3138 1431 28 30" style="left:24px;top:9px" fill="none" stroke="#fff" stroke-width="1.9"><path d="M3140 1438.6 H3164 M3148.4 1438.6 V1434.8 H3156.2 V1438.6 M3143.5 1438.6 V1457.2 H3160.5 V1438.6 M3149.3 1442.7 V1453 M3154.7 1442.7 V1453"/></svg></div></div><div id="frame"></div>
<script>(function(){var z=window.innerWidth/3600;if(z>0&&Math.abs(z-1)>0.002){document.documentElement.style.zoom=z;}})();</script>
</body></html>
